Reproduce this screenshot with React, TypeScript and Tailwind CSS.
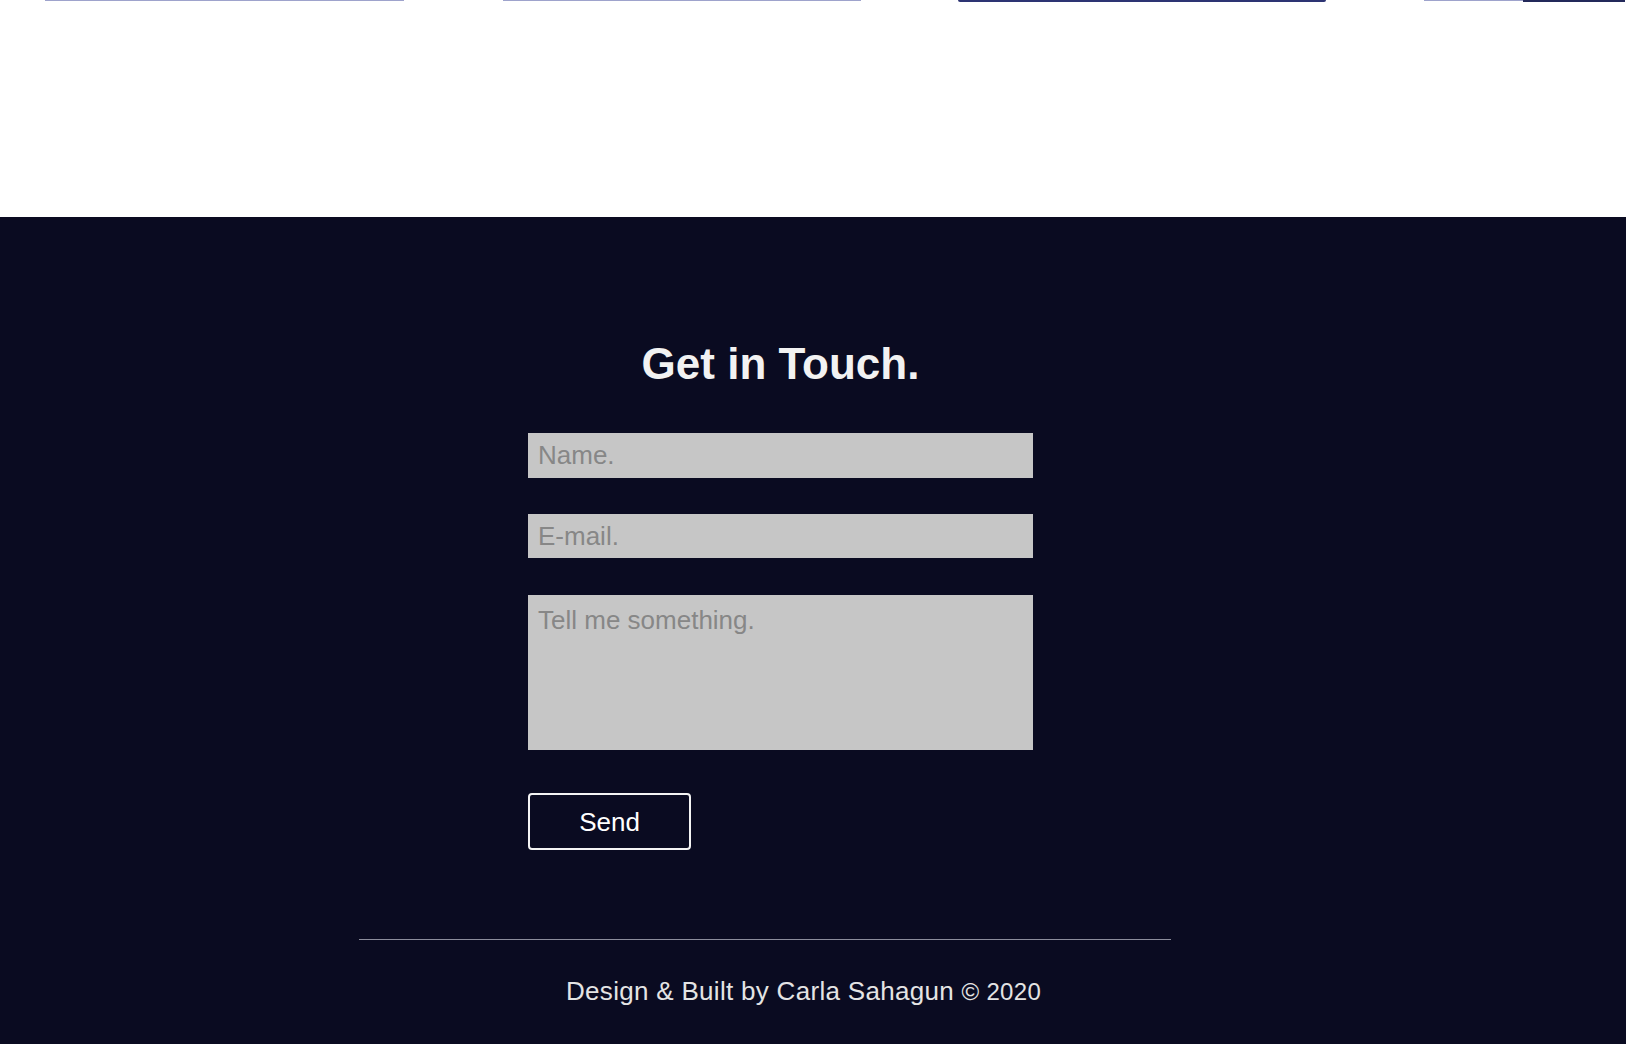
import React from "react";

export default function App() {
  const font = { fontFamily: '"Liberation Sans", Arial, Helvetica, sans-serif' };
  return (
    <div style={font} className="w-[1626px] h-[1044px] overflow-hidden bg-white">
      {/* top white area with card bottoms */}
      <div className="h-[217px] bg-white relative">
        <div className="flex items-start">
          <div className="ml-[45px] w-[359px] h-px bg-[#9ea3cc]" />
          <div className="ml-[99px] w-[358px] h-px bg-[#9ea3cc]" />
          <div className="ml-[97px] w-[368px] h-[2px] rounded-b-[2px] bg-[#2d3473]" />
          <div className="ml-[98px] w-[99px] h-px bg-[#9ea3cc]" />
          <div className="w-[102px] h-[2px] bg-[#23295a]" />
        </div>
      </div>

      {/* dark footer / contact */}
      <div className="bg-[#0a0b21] h-[827px] pt-[122px]">
        <div className="ml-[528px] w-[505px] flex flex-col">
          <h2 className="text-center text-[44px] leading-[50px] font-bold text-[#f2f2f2]">
            Get in Touch.
          </h2>
          <input
            type="text"
            placeholder="Name."
            className="mt-[44px] h-[45px] w-full bg-[#c6c6c6] px-[10px] text-[26px] text-[#333] placeholder:text-[#878787] outline-none border-0"
            style={font}
          />
          <input
            type="text"
            placeholder="E-mail."
            className="mt-[36px] h-[44px] w-full bg-[#c6c6c6] px-[10px] text-[26px] text-[#333] placeholder:text-[#878787] outline-none border-0"
            style={font}
          />
          <textarea
            placeholder="Tell me something."
            className="mt-[37px] h-[155px] w-full bg-[#c6c6c6] px-[10px] pt-[10px] text-[26px] leading-[30px] text-[#333] placeholder:text-[#878787] outline-none border-0 resize-none block"
            style={font}
          />
          <button
            className="mt-[43px] w-[163px] h-[57px] border-2 border-[#f4f4f4] rounded-[4px] text-white text-[26px] leading-[30px] bg-transparent"
            style={font}
          >
            Send
          </button>
        </div>
        <div className="mt-[89px] ml-[359px] w-[812px] h-px bg-[#8c8d9c]" />
        <p className="mt-[36px] ml-[566px] text-[26px] leading-[30px] text-[#e4e4e4] whitespace-nowrap tracking-[0.3px]">
          Design &amp; Built by Carla Sahagun <span className="text-[24px]">© 2020</span>
        </p>
      </div>
    </div>
  );
}
